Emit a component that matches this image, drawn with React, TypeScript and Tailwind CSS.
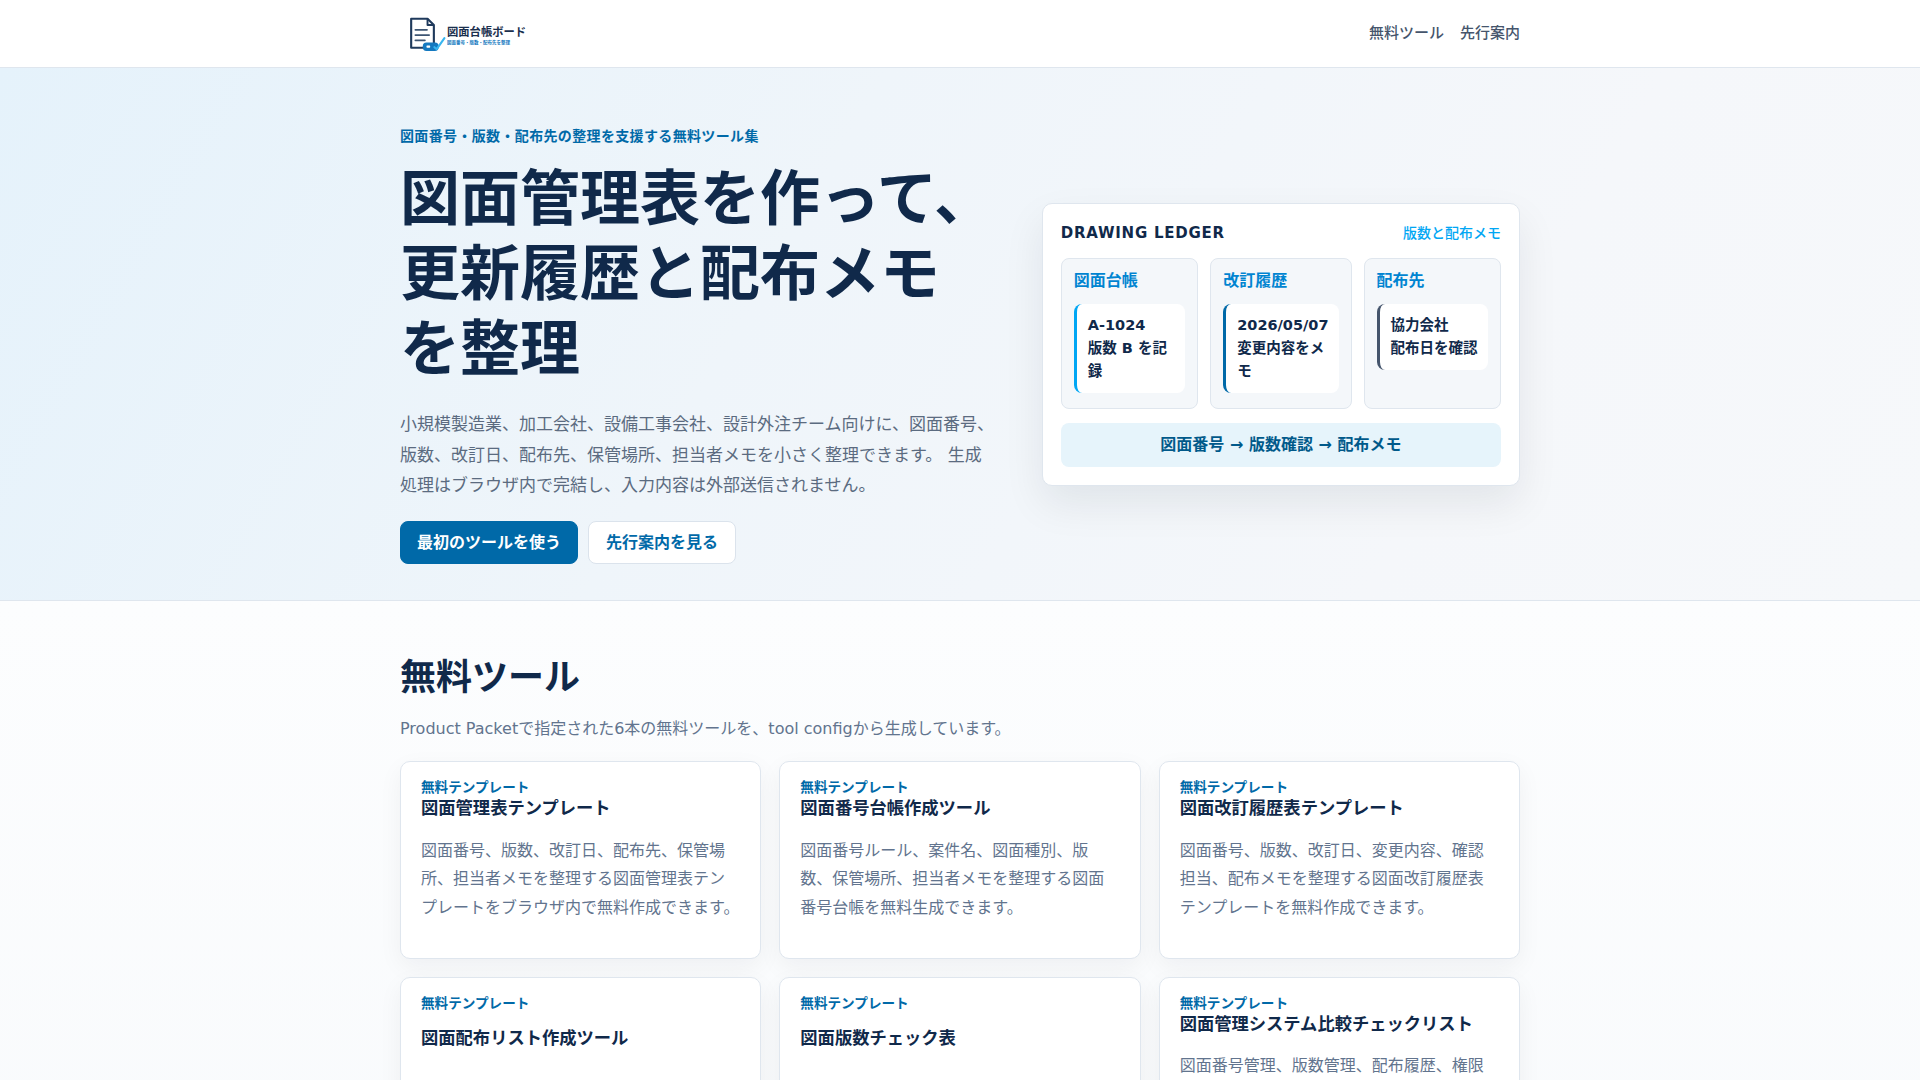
import React from 'react';

/**
 * 図面台帳ボード - 無料ツール集 トップページ
 */

const TOOLS = [
  {
    label: '無料テンプレート',
    title: '図面管理表テンプレート',
    desc: '図面番号、版数、改訂日、配布先、保管場所、担当者メモを整理する図面管理表テンプレートをブラウザ内で無料作成できます。',
  },
  {
    label: '無料テンプレート',
    title: '図面番号台帳作成ツール',
    desc: '図面番号ルール、案件名、図面種別、版数、保管場所、担当者メモを整理する図面番号台帳を無料生成できます。',
  },
  {
    label: '無料テンプレート',
    title: '図面改訂履歴表テンプレート',
    desc: '図面番号、版数、改訂日、変更内容、確認担当、配布メモを整理する図面改訂履歴表テンプレートを無料作成できます。',
  },
  {
    label: '無料テンプレート',
    title: '図面配布リスト作成ツール',
    desc: '配布先、配布日、版数、受領確認、担当者メモを整理する図面配布リストを無料生成できます。',
  },
  {
    label: '無料テンプレート',
    title: '図面版数チェック表',
    desc: '図面番号、現行版数、改訂日、確認者、差し替えメモを整理する図面版数チェック表を無料作成できます。',
  },
  {
    label: '無料テンプレート',
    title: '図面管理システム比較チェックリスト',
    desc: '図面番号管理、版数管理、配布履歴、権限設定、検索性などの観点から図面管理システムを比較するチェックリストを無料作成できます。',
  },
];

const LEDGER = [
  { title: '図面台帳', lines: ['A-1024', '版数 B を記録'], bar: 'border-sky-500' },
  { title: '改訂履歴', lines: ['2026/05/07', '変更内容をメモ'], bar: 'border-sky-700' },
  { title: '配布先', lines: ['協力会社', '配布日を確認'], bar: 'border-slate-600' },
];

const Logo: React.FC = () => (
  <a href="#" className="ml-2 flex items-center gap-[1px]">
    <svg width="38" height="36" viewBox="0 0 36 34" fill="none">
      {/* document */}
      <path
        d="M3 2.5h15.5l6 6V30H3z"
        fill="#fff"
        stroke="#1f3a5c"
        strokeWidth="2"
        strokeLinejoin="round"
      />
      <path d="M18.5 2.5v6h6" stroke="#1f3a5c" strokeWidth="1.8" strokeLinejoin="round" />
      <path d="M7 13h11M7 18h13M7 23h9" stroke="#3d5573" strokeWidth="1.7" strokeLinecap="round" />
      {/* tag + check */}
      <rect x="14" y="25" width="15" height="8" rx="3.5" fill="#1479c0" />
      <rect x="17.5" y="28" width="3.5" height="2" rx="0.6" fill="#fff" />
      <path d="M25 29.5l2.2 1.8L34.5 21" stroke="#38b6f0" strokeWidth="2" strokeLinecap="round" strokeLinejoin="round" />
    </svg>
    <div className="mt-[3px] flex flex-col">
      <div className="h-[14px] text-[11.3px] leading-[14px] font-bold text-[#1a2f4d]">図面台帳ボード</div>
      <div className="h-[5px] overflow-visible">
        <span className="block origin-top-left scale-50 whitespace-nowrap text-[9px] leading-[9px] font-bold text-[#1479c0]">
          図面番号・版数・配布先を整理
        </span>
      </div>
    </div>
  </a>
);

const LedgerCard: React.FC = () => (
  <div className="rounded-[10px] border border-[#dfe6ee] bg-white p-[18px] shadow-[0_18px_40px_rgba(15,23,42,0.08)]">
    <div className="flex items-center justify-between leading-[22px]">
      <span className="text-[15px] font-bold tracking-wider text-[#10294a]">DRAWING LEDGER</span>
      <span className="text-sm font-medium text-sky-500">版数と配布メモ</span>
    </div>

    <div className="mt-[14px] grid grid-cols-[1fr_1fr_1fr] gap-3">
      {LEDGER.map((col) => (
        <div key={col.title} className="rounded-lg border border-[#dfe6ee] bg-[#f4f7fa] px-3 pt-3 pb-[15px]">
          <div className="text-base leading-5 font-semibold text-sky-600">{col.title}</div>
          <div className={`mt-[13px] rounded-lg border-l-[3px] ${col.bar} bg-white py-2.5 pl-[11px] pr-2.5 text-[14.5px] leading-[23px] font-semibold text-[#10294a]`}>
            <div className="font-bold">{col.lines[0]}</div>
            <div>{col.lines[1]}</div>
          </div>
        </div>
      ))}
    </div>

    <div className="mt-[14px] rounded-lg bg-[#e6f4fb] py-2.5 text-center text-base leading-6 font-bold text-sky-800">
      図面番号 → 版数確認 → 配布メモ
    </div>
  </div>
);

const ToolCard: React.FC<{ tool: (typeof TOOLS)[number] }> = ({ tool }) => (
  <a
    href="#"
    className="flex flex-col justify-between rounded-[10px] border border-[#dfe6ee] bg-white px-5 pt-[17px] pb-[35px] shadow-[0_8px_24px_rgba(15,23,42,0.05)]"
  >
    <div className="text-[13.6px] leading-[1.3] font-semibold text-sky-700">{tool.label}</div>
    <h3 className="text-[17.3px] leading-[1.3] font-bold text-[#10294a]">{tool.title}</h3>
    <p className="mt-[17px] text-base leading-[1.8] text-slate-500">{tool.desc}</p>
  </a>
);

export default function App() {
  return (
    <div className="min-h-screen bg-[#f8fafc] font-['DejaVu_Sans','Noto_Sans_CJK_JP',sans-serif] text-slate-800 [text-spacing-trim:space-all]">
      {/* Header */}
      <header className="h-[68px] border-b border-[#dfe6ee] bg-white">
        <div className="mx-auto flex h-full max-w-[1120px] items-center justify-between">
          <Logo />
          <nav className="flex gap-4 text-[15px] font-medium text-slate-600">
            <a href="#">無料ツール</a>
            <a href="#">先行案内</a>
          </nav>
        </div>
      </header>

      {/* Hero */}
      <section className="border-b border-[#dfe6ee] bg-[linear-gradient(120deg,#e5f2fb_0%,#eff5fa_40%,#f5f7fa_75%,#f6f8fa_100%)]">
        <div className="mx-auto grid max-w-[1120px] grid-cols-[1.25fr_1fr] items-center gap-11 pt-[58px] pb-[36px]">
          <div>
            <p className="text-sm leading-[21px] font-bold tracking-wide text-sky-700">
              図面番号・版数・配布先の整理を支援する無料ツール集
            </p>
            <h1 className="mt-[15px] text-[60px] leading-[1.25] font-bold text-[#10294a]">
              図面管理表を作って、更新履歴と配布メモを整理
            </h1>
            <p className="mt-[22px] text-[17px] leading-[1.8] text-[#5b6b80]">
              小規模製造業、加工会社、設備工事会社、設計外注チーム向けに、図面番号、版数、改訂日、配布先、保管場所、担当者メモを小さく整理できます。 生成処理はブラウザ内で完結し、入力内容は外部送信されません。
            </p>
            <div className="mt-5 flex gap-2.5">
              <a
                href="#"
                className="rounded-lg border border-sky-700 bg-sky-700 px-4 py-2 text-base leading-[25px] font-bold text-white"
              >
                最初のツールを使う
              </a>
              <a
                href="#"
                className="rounded-lg border border-[#dbe3ec] bg-white px-[17px] py-2 text-base leading-[25px] font-bold text-sky-700"
              >
                先行案内を見る
              </a>
            </div>
          </div>
          <LedgerCard />
        </div>
      </section>

      {/* Tools */}
      <section className="bg-[linear-gradient(180deg,#fcfdfe_0%,#f8fafc_100%)] pb-20">
        <div className="mx-auto max-w-[1120px] pt-[54px]">
          <h2 className="text-4xl leading-[1.25] font-bold text-[#10294a]">無料ツール</h2>
          <p className="mt-4 text-base leading-[1.6] text-slate-500">
            Product Packetで指定された6本の無料ツールを、tool configから生成しています。
          </p>
          <div className="mt-5 grid grid-cols-3 gap-x-[18px] gap-y-[18px]">
            {TOOLS.map((tool) => (
              <ToolCard key={tool.title} tool={tool} />
            ))}
          </div>
        </div>
      </section>
    </div>
  );
}
